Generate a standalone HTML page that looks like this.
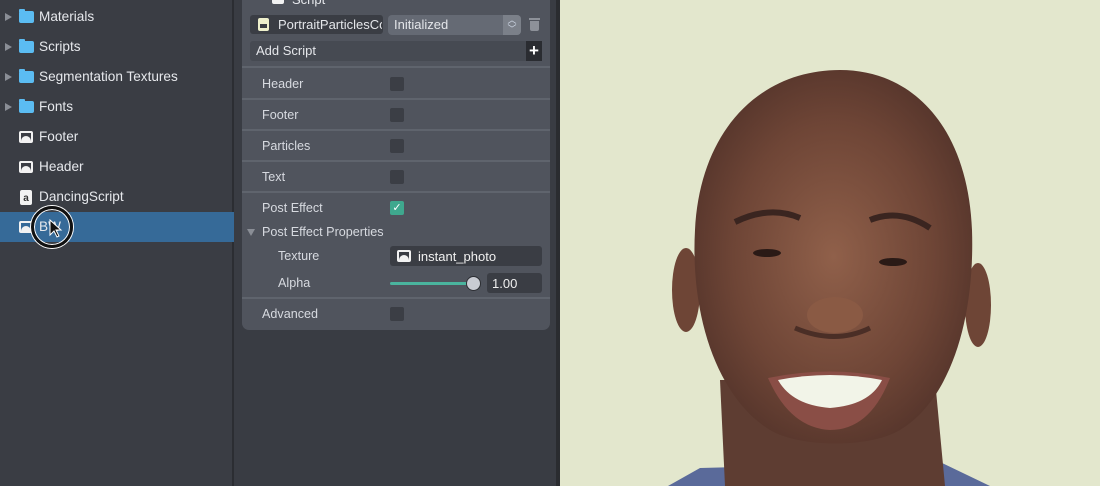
<!DOCTYPE html>
<html><head><meta charset="utf-8"><style>
*{margin:0;padding:0;box-sizing:border-box}
body{width:1100px;height:486px;overflow:hidden;background:#393c43;font-family:"Liberation Sans",sans-serif;font-size:13px;color:#e4e6ea;position:relative}
.abs{position:absolute}
#left{left:0;top:0;width:234px;height:486px;background:#3a3d44;border-right:2px solid #2b2d32}
.item{position:absolute;left:0;width:234px;height:30px;line-height:30px;color:#e6e8ec;font-size:13.6px}
.item .t{position:absolute;left:39px;top:0}
.arrow{position:absolute;left:5px;top:11px;width:0;height:0;border-left:7px solid #8a8e96;border-top:4px solid transparent;border-bottom:4px solid transparent}
.folder{position:absolute;left:19px;top:9px;width:15px;height:12px;background:#5bbcf2;border-radius:2px}
.folder:before{content:"";position:absolute;left:0;top:-2px;width:6px;height:3px;background:#5bbcf2;border-radius:1px 1px 0 0}
.img{position:absolute;left:19px;top:9px;width:14px;height:12px;border:2px solid #f2f2f2;border-radius:2px}
.img:after{content:"";position:absolute;left:0;bottom:0;width:10px;height:5px;background:#f2f2f2;border-radius:5px 5px 0 0}
#card{left:242px;top:0;width:308px;height:330px;background:#50545d;border-radius:0 0 7px 7px}
.div{position:absolute;left:242px;width:308px;height:2px;background:#5f646d}
.lab{position:absolute;left:262px;color:#d7dae0;font-size:12.6px}
.cb{position:absolute;left:390px;width:14px;height:14px;background:#3b3e45;border-radius:2px}
</style></head><body>
<div id="left" class="abs">
 <div class="item" style="top:2px"><div class="arrow"></div><div class="folder"></div><span class="t">Materials</span></div>
 <div class="item" style="top:32px"><div class="arrow"></div><div class="folder"></div><span class="t">Scripts</span></div>
 <div class="item" style="top:62px"><div class="arrow"></div><div class="folder"></div><span class="t">Segmentation Textures</span></div>
 <div class="item" style="top:92px"><div class="arrow"></div><div class="folder"></div><span class="t">Fonts</span></div>
 <div class="item" style="top:122px"><div class="img"></div><span class="t">Footer</span></div>
 <div class="item" style="top:152px"><div class="img"></div><span class="t">Header</span></div>
 <div class="item" style="top:182px"><div style="position:absolute;left:20px;top:8px;width:12px;height:15px;background:#f2f2f2;border-radius:2px;color:#333;font-size:10px;line-height:17px;text-align:center;font-weight:bold">a</div><span class="t">DancingScript</span></div>
 <div class="item" style="top:212px;background:#366a98"><div class="img"></div><span class="t">BW</span></div>
</div>
<div class="abs" style="left:31px;top:206px;width:42px;height:42px;border-radius:50%;border:3px solid #111;box-shadow:0 0 0 1px #fff inset,0 0 0 1px #fff"></div>
<svg class="abs" style="left:49px;top:219px" width="14" height="20" viewBox="0 0 14 20"><path d="M1 1 L1 16 L5 12 L8 18 L10 17 L7 11 L12 11 Z" fill="#111" stroke="#fff" stroke-width="1"/></svg>
<div id="card" class="abs"></div>
<div class="abs" style="left:272px;top:-6px;width:12px;height:10px;background:#f2f2f2;border-radius:2px"></div>
<div class="abs" style="left:292px;top:-8px;color:#e6e8ec">Script</div>
<div class="abs" style="left:250px;top:15px;width:133px;height:19px;background:#3a3d44;border-radius:3px"></div>
<div class="abs" style="left:258px;top:18px;width:11px;height:13px;background:#eef0cc;border-radius:2px"><div style="position:absolute;left:2px;top:6px;width:7px;height:4px;background:#3a3d44"></div></div>
<div class="abs" style="left:278px;top:17px;width:104px;overflow:hidden;white-space:nowrap">PortraitParticlesController</div>
<div class="abs" style="left:388px;top:15px;width:133px;height:20px;background:#656a74;border-radius:4px"></div>
<div class="abs" style="left:394px;top:17px">Initialized</div>
<div class="abs" style="left:503px;top:15px;width:18px;height:20px;background:#7b8089;border-radius:0 4px 4px 0;color:#cfd8e6;font-size:9px;line-height:9px;text-align:center;padding-top:1px">︿<br>﹀</div>
<div class="abs" style="left:529px;top:18px;width:11px;height:13px;border-top:2px solid #8d9199"><div style="position:absolute;left:1px;top:1px;width:9px;height:10px;background:#8d9199;border-radius:0 0 2px 2px"></div></div>
<div class="abs" style="left:250px;top:41px;width:292px;height:20px;background:#464a52;border-radius:3px"></div>
<div class="abs" style="left:256px;top:43px">Add Script</div>
<div class="abs" style="left:526px;top:41px;width:16px;height:20px;background:#2a2c31;color:#fff;font-size:17px;line-height:19px;text-align:center;font-weight:bold">+</div>
<div class="div" style="top:66px"></div>
<div class="div" style="top:98px"></div>
<div class="div" style="top:129px"></div>
<div class="div" style="top:160px"></div>
<div class="div" style="top:191px"></div>
<div class="div" style="top:297px"></div>
<div class="lab" style="top:77px">Header</div><div class="cb" style="top:77px"></div>
<div class="lab" style="top:108px">Footer</div><div class="cb" style="top:108px"></div>
<div class="lab" style="top:139px">Particles</div><div class="cb" style="top:139px"></div>
<div class="lab" style="top:170px">Text</div><div class="cb" style="top:170px"></div>
<div class="lab" style="top:201px">Post Effect</div><div class="cb" style="top:201px;background:#3fa88e;color:#fff;font-size:11px;line-height:14px;text-align:center">✓</div>
<div class="abs" style="left:247px;top:229px;border-top:7px solid #8a8e96;border-left:4px solid transparent;border-right:4px solid transparent"></div>
<div class="lab" style="top:225px">Post Effect Properties</div>
<div class="lab" style="left:278px;top:249px">Texture</div>
<div class="abs" style="left:390px;top:246px;width:152px;height:20px;background:#3a3d44;border-radius:3px"></div>
<div class="img" style="left:397px;top:250px"></div>
<div class="abs" style="left:418px;top:249px;color:#f0f0f0">instant_photo</div>
<div class="lab" style="left:278px;top:276px">Alpha</div>
<div class="abs" style="left:390px;top:282px;width:83px;height:3px;background:#4ab49e;border-radius:2px"></div>
<div class="abs" style="left:466px;top:276px;width:15px;height:15px;background:#c9ccd3;border-radius:50%;border:1px solid #2c2e33"></div>
<div class="abs" style="left:487px;top:273px;width:55px;height:20px;background:#3a3d44;border-radius:3px"></div>
<div class="abs" style="left:492px;top:276px;color:#f0f0f0">1.00</div>
<div class="lab" style="top:307px">Advanced</div><div class="cb" style="top:307px"></div>
<div class="abs" style="left:556px;top:0;width:4px;height:486px;background:#2a2c30"></div>
<svg class="abs" style="left:560px;top:0" width="540" height="486" viewBox="560 0 540 486">
<defs><radialGradient id="sk" cx="0.5" cy="0.5" r="0.6"><stop offset="0" stop-color="#90604a"/><stop offset="0.6" stop-color="#6e4536"/><stop offset="1" stop-color="#4e3028"/></radialGradient></defs>
<rect x="560" y="0" width="540" height="486" fill="#e3e7cd"/>
<path d="M668 486 L700 468 L940 462 L990 486Z" fill="#5a6a9a"/>
<path d="M720 380 L725 486 L945 486 L935 380Z" fill="#5e3d32"/>
<ellipse cx="686" cy="290" rx="14" ry="42" fill="#6e4536"/>
<ellipse cx="978" cy="305" rx="13" ry="42" fill="#6e4536"/>
<path d="M840 70 C760 70 700 130 695 230 C690 320 720 400 770 430 C800 448 870 448 900 430 C950 400 975 320 972 230 C968 130 915 70 840 70Z" fill="url(#sk)"/>
<path d="M735 222 Q770 205 800 218" stroke="#3a2520" stroke-width="6" fill="none"/>
<path d="M870 220 Q900 208 930 228" stroke="#3a2520" stroke-width="6" fill="none"/>
<ellipse cx="767" cy="253" rx="14" ry="4" fill="#2a1a16"/>
<ellipse cx="893" cy="262" rx="14" ry="4" fill="#2a1a16"/>
<ellipse cx="835" cy="315" rx="28" ry="18" fill="#8a5a44"/>
<path d="M795 328 Q835 345 870 328" stroke="#4a2e26" stroke-width="5" fill="none"/>
<path d="M768 378 Q830 365 890 378 Q870 430 830 430 Q790 428 768 378Z" fill="#8a4e46"/>
<path d="M778 380 Q830 370 882 380 Q870 405 830 408 Q792 405 778 380Z" fill="#f2f4e8"/>
</svg>
</body></html>
